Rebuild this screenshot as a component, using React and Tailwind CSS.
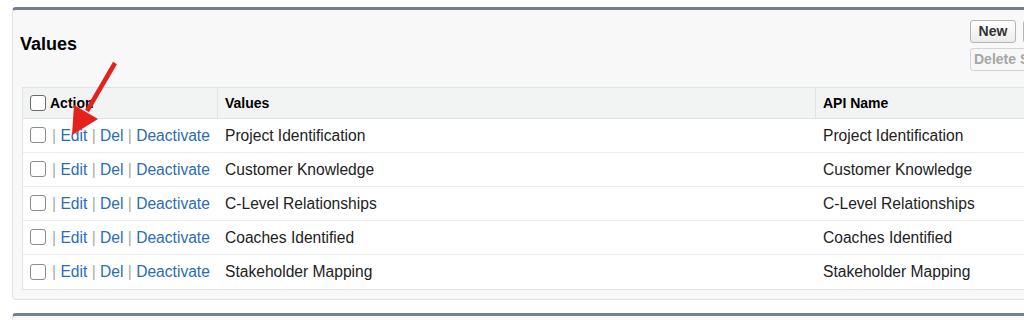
import React from "react";

const rows = [
  "Project Identification",
  "Customer Knowledge",
  "C-Level Relationships",
  "Coaches Identified",
  "Stakeholder Mapping",
];

function Checkbox({ dark }) {
  return (
    <span
      className={
        "inline-block w-[16px] h-[16px] shrink-0 rounded-[3px] bg-white border-[1.5px] " +
        (dark ? "border-[#6b6b6b]" : "border-[#8c8c8c]")
      }
    />
  );
}

function Pipe() {
  return <span className="text-[#a8a8a8]">|</span>;
}

// Values panel with the picklist table
export default function App() {
  return (
    <div className="relative w-[1024px] h-[320px] overflow-hidden bg-white font-['Liberation_Sans',Arial,sans-serif]">
      <div className="ml-[12px] mt-[7px] w-[1100px] h-[293px] rounded-[4px] border border-[#e2e2e2] border-t-[3px] border-t-[#737e96] bg-[#f8f8f8] pl-[7px]">
        {/* Title + buttons */}
        <div className="flex h-[77px]">
          <h2 className="w-[950px] mt-[23px] text-[18px] leading-[22px] font-bold text-black">
            Values
          </h2>
          <div className="mt-[10px] flex flex-col gap-[5px]">
            <div className="flex gap-[7px]">
              <button className="w-[46px] h-[23px] rounded-[3px] border border-[#b5b5b5] bg-gradient-to-b from-white to-[#ececec] text-[14px] font-bold text-[#333]">
                New
              </button>
              <button className="w-[80px] h-[23px] rounded-[3px] border border-[#b5b5b5] bg-gradient-to-b from-white to-[#ececec] text-[14px] font-bold text-[#333]">
                Reorder
              </button>
            </div>
            <button className="w-[130px] h-[23px] rounded-[3px] border border-[#d4d4d4] bg-[#f7f7f7] pl-[3px] text-left text-[14px] font-bold text-[#a6a6a6]">
              Delete Selected
            </button>
          </div>
        </div>

        {/* Table */}
        <div className="ml-[2px] w-[1085px] border border-[#e0e3e5] bg-white text-[15.6px] text-[#222]">
          <div className="flex h-[31px] border-b border-[#e0e3e5] bg-[#f2f3f3] text-[14px] font-bold text-black">
            <div className="w-[194px] flex items-center gap-[4px] pl-[7px]">
              <Checkbox dark />
              <span>Action</span>
            </div>
            <div className="w-[598px] flex items-center border-l border-[#dfe3e6] pl-[7px]">
              Values
            </div>
            <div className="flex-1 flex items-center border-l border-[#dfe3e6] pl-[7px]">
              API Name
            </div>
          </div>
          {rows.map((name, i) => (
            <div
              key={name}
              className={
                "flex h-[34px] items-center " +
                (i < rows.length - 1 ? "border-b border-[#ececec]" : "")
              }
            >
              <div className="w-[195px] flex items-center pl-[7px]">
                <Checkbox />
                <span className="ml-[6px] whitespace-pre">
                  <Pipe /> <a className="text-[#2a6db3]">Edit</a> <Pipe />{" "}
                  <a className="text-[#2a6db3]">Del</a> <Pipe />{" "}
                  <a className="text-[#2a6db3]">Deactivate</a>
                </span>
              </div>
              <div className="w-[598px] pl-[7px]">{name}</div>
              <div className="flex-1 pl-[7px]">{name}</div>
            </div>
          ))}
        </div>
      </div>

      {/* next panel edge */}
      <div className="ml-[12px] mt-[13px] w-[1100px] h-[20px] rounded-t-[4px] border-x border-[#e2e2e2] border-t-[3px] border-t-[#737e96] bg-[#f8f8f8]" />

      {/* red annotation arrow */}
      <svg
        className="absolute left-0 top-0 pointer-events-none"
        width="1024"
        height="320"
        viewBox="0 0 1024 320"
      >
        <line x1="115" y1="63" x2="87" y2="111" stroke="#e4221b" strokeWidth="4.5" />
        <polygon points="72,135 98,119 74,105" fill="#e4221b" />
      </svg>
    </div>
  );
}
